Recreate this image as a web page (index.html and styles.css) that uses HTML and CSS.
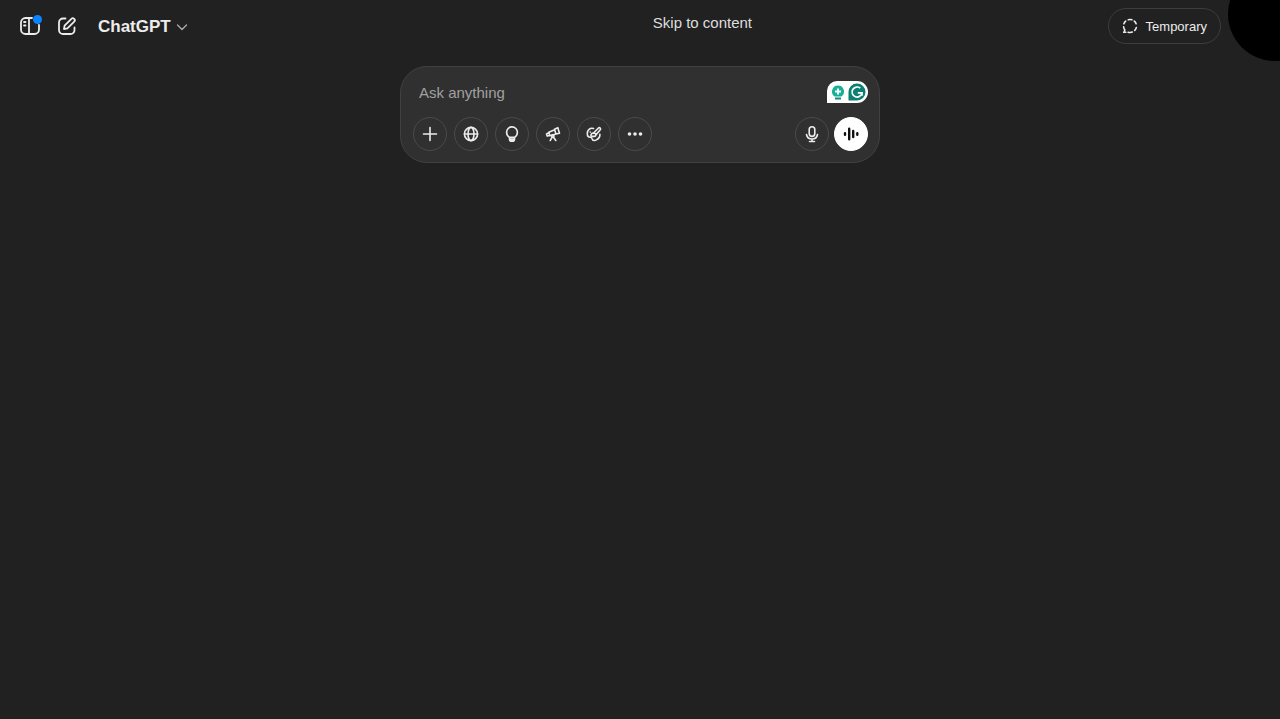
FILE: index.html
```html
<!DOCTYPE html>
<html lang="en">
<head>
    <meta charset="UTF-8">
    <meta name="viewport" content="width=device-width, initial-scale=1.0">
    <title>ChatGPT</title>
    <link rel="stylesheet" href="styles.css">
</head>
<body>

    <a class="skip-link" href="#main">Skip to content</a>

    <header class="top-bar">
        <button class="icon-btn" type="button" aria-label="Open sidebar">
            <svg width="22" height="22" viewBox="0 0 22 22" fill="none" stroke="currentColor" stroke-width="1.8" stroke-linecap="round">
                <path d="M13 3H6.500A4.500 4.500 0 0 0 2 7.500v7A4.500 4.500 0 0 0 6.500 19h9a4.500 4.500 0 0 0 4.500-4.500V10"/>
                <path d="M10 3v16M5 7h1.500M5 10.500h1.500"/>
            </svg>
            <span class="dot"></span>
        </button>
        <button class="icon-btn" type="button" aria-label="New chat">
            <svg width="22" height="22" viewBox="0 0 22 22" fill="none" stroke="currentColor" stroke-width="1.8" stroke-linecap="round" stroke-linejoin="round">
                <path d="M9.500 3.500H7A4 4 0 0 0 3 7.500V15a4 4 0 0 0 4 4h7.500a4 4 0 0 0 4-4v-2.500"/>
                <path d="M8 14l.6-3.400 6.800-6.800a1.950 1.950 0 0 1 2.800 2.800l-6.800 6.800z"/>
            </svg>
        </button>
        <button class="model-btn" type="button">
            ChatGPT
            <svg width="12" height="12" viewBox="0 0 12 12" fill="none" stroke="currentColor" stroke-width="1.4" stroke-linecap="round" stroke-linejoin="round">
                <path d="M1.500 4L6 8.500 10.500 4"/>
            </svg>
        </button>
        <button class="temporary-btn" type="button">
            <svg width="16" height="16" viewBox="0 0 16 16" fill="none" stroke="currentColor" stroke-width="1.6" stroke-linecap="round">
                <path d="M6.300 1.700a6.500 6.500 0 0 1 3.600 0M12.300 3.100a6.500 6.500 0 0 1 1.800 2.600M14.300 9.600a6.500 6.500 0 0 1-1.600 2.900M10.300 14.100a6.500 6.500 0 0 1-4.200.1M3.700 3.100a6.500 6.500 0 0 0-1.800 2.600M1.600 8.700c.1 1.300.6 2.400 1.200 3.300L2 14.200h1.800"/>
            </svg>
            Temporary
        </button>
    </header>
    <div class="corner-circle"></div>

    <main id="main">
        <form class="composer">
            <div class="prompt-row">
                <input class="prompt" type="text" placeholder="Ask anything" aria-label="Ask anything">
                <button class="grammar" type="button" aria-label="Writing suggestions">
                    <svg width="42" height="22" viewBox="0 0 42 22">
                        <path d="M1 22V10A10 10 0 0 1 11 0h20a11 11 0 0 1 0 22z" fill="#fff"/>
                        <path d="M12 4.500a6 6 0 0 0-3.300 11h6.600a6 6 0 0 0-3.300-11z" fill="#15b097"/>
                        <path d="M9 17.500h6" stroke="#0b8f7c" stroke-width="2"/>
                        <path d="M12 7.500v6M9 10.500h6" stroke="#fff" stroke-width="2"/>
                        <path d="M22.500 19.500V11a8.500 8.500 0 1 1 8.500 8.500z" fill="#0b8070"/>
                        <path d="M34.300 7.200A5 5 0 1 0 36 11.800H31.800M36 11.800v3" fill="none" stroke="#fff" stroke-width="1.700"/>
                    </svg>
                </button>
            </div>
            <div class="tools">
                <button class="tool" type="button" aria-label="Add files">
                    <svg width="18" height="18" viewBox="0 0 18 18">
                        <path d="M9 2.500v13M2.500 9h13"/>
                    </svg>
                </button>
                <button class="tool" type="button" aria-label="Search the web">
                    <svg width="18" height="18" viewBox="0 0 18 18">
                        <circle cx="9" cy="9" r="6.600"/>
                        <ellipse cx="9" cy="9" rx="3" ry="6.600"/>
                        <path d="M2.400 9h13.200"/>
                    </svg>
                </button>
                <button class="tool" type="button" aria-label="Reason">
                    <svg width="18" height="18" viewBox="0 0 18 18">
                        <path d="M6.300 12.200C4.600 11.200 3.600 9.500 3.600 7.300a5.400 5.400 0 0 1 10.800 0c0 2.200-1 3.900-2.700 4.900zM6.500 12.300v1.900a2 2 0 0 0 2 2h1a2 2 0 0 0 2-2v-1.900"/>
                        <path d="M7 14h4v1L9.500 16h-1L7 15z" fill="currentColor"/>
                    </svg>
                </button>
                <button class="tool" type="button" aria-label="Deep research">
                    <svg width="18" height="18" viewBox="0 0 18 18">
                        <path d="M10.500 4.200l3.300-1.500 1.700 5.500-3.500.9zM10.700 4.800L4.800 7.300l1 3.400 6.200-1.800M4.700 7.800L2.500 8.900l.7 2.200 2.500-.7"/>
                        <circle cx="8.800" cy="11.100" r="1.200"/>
                        <path d="M8.200 12.200L6.200 15.500M9.500 12.200l2.300 3.300"/>
                    </svg>
                </button>
                <button class="tool" type="button" aria-label="Create image">
                    <svg width="18" height="18" viewBox="0 0 18 18">
                        <path d="M8.500 3.500C5 2.600 2.300 4.800 2.300 8.400c0 2.500 1.400 3.800 3.100 3.800 1.200 0 1.500.6 1.800 1.700.6 1.900 2.400 2 4.200 1 2.300-1.200 3.700-3.200 3.500-5.600"/>
                        <path d="M8.400 8.300l4.800-5c1.500-1.500 3.200.1 1.900 1.700l-4.500 5.300M8.600 8c-1.800-.2-2.700 1.100-2.700 2.900 2.600.8 4.700.8 5-.9.100-1.200-.9-2-2.300-2z"/>
                        <path d="M5.300 7v.1"/>
                    </svg>
                </button>
                <button class="tool" type="button" aria-label="More">
                    <svg class="solid" width="18" height="18" viewBox="0 0 18 18">
                        <circle cx="3.500" cy="9" r="1.800"/>
                        <circle cx="9" cy="9" r="1.800"/>
                        <circle cx="14.500" cy="9" r="1.800"/>
                    </svg>
                </button>
                <div class="speech">
                    <button class="tool" type="button" aria-label="Dictate">
                        <svg width="18" height="18" viewBox="0 0 18 18">
                            <rect x="6.200" y="1.800" width="5.600" height="9.600" rx="2.800"/>
                            <path d="M3.500 9.500a5.600 5.600 0 0 0 11 0M9 14v2.500M6.500 16.500h5"/>
                        </svg>
                    </button>
                    <button class="tool voice" type="button" aria-label="Voice mode">
                        <svg width="18" height="18" viewBox="0 0 18 18">
                            <path d="M3 8.300v1.400M7.200 3.800v10.400M11.200 6v6M15.300 8.300v1.400"/>
                        </svg>
                    </button>
                </div>
            </div>
        </form>
    </main>

</body>
</html>
```
FILE: styles.css
```css
* {
    box-sizing: border-box;
}

body {
    background: #212121;
    margin: 0;
    font-family: "Liberation Sans", Arial, sans-serif;
    color: #ececec;
    overflow-x: hidden;
}

button {
    display: flex;
    align-items: center;
    justify-content: center;
    padding: 0;
    border: 0;
    background: none;
    color: inherit;
    font-family: inherit;
    cursor: pointer;
}

svg {
    display: block;
    flex: none;
}

.skip-link {
    position: absolute;
    top: 13px;
    left: 51%;
    font-size: 15px;
    line-height: 20px;
    color: #dedede;
    text-decoration: none;
}

.top-bar {
    display: flex;
    align-items: center;
    height: 52px;
    padding: 0 59px 0 13px;
}

.icon-btn {
    position: relative;
    width: 34px;
    height: 34px;
    margin-right: 3px;
}

.dot {
    position: absolute;
    top: 6px;
    right: 5px;
    width: 9px;
    height: 9px;
    border-radius: 50%;
    background: #0a84ff;
}

.model-btn {
    gap: 5px;
    margin-left: 11px;
    padding-top: 2px;
    font-size: 17px;
    font-weight: bold;
    line-height: 24px;
}

.model-btn svg {
    color: #a8a8a8;
}

.temporary-btn {
    gap: 8px;
    height: 36px;
    margin-left: auto;
    padding: 0 13px;
    border: 1px solid #3d3d3d;
    border-radius: 18px;
    font-size: 13px;
}

.corner-circle {
    position: absolute;
    top: -33px;
    right: -42px;
    width: 94px;
    height: 94px;
    border-radius: 50%;
    background: #000;
    clip-path: inset(0 42px 0 0);
}

#main {
    padding: 14px 16px;
}

.composer {
    max-width: 480px;
    margin: 0 auto;
    padding: 13px 11px 11px 12px;
    border: 1px solid #414141;
    border-radius: 27px;
    background: #303030;
}

.prompt-row {
    display: flex;
    align-items: center;
    height: 24px;
    margin-bottom: 13px;
    padding-left: 6px;
}

.prompt {
    flex: 1;
    min-width: 0;
    padding: 0;
    border: 0;
    outline: 0;
    background: none;
    color: #ececec;
    font-family: inherit;
    font-size: 15px;
}

.prompt::placeholder {
    color: #a0a0a0;
}

.tools {
    display: flex;
    gap: 7px;
}

.tool {
    width: 34px;
    height: 34px;
    border: 1px solid #4a4a4a;
    border-radius: 50%;
}

.tool svg {
    fill: none;
    stroke: currentColor;
    stroke-width: 1.6;
    stroke-linecap: round;
    stroke-linejoin: round;
}

.tool .solid {
    fill: currentColor;
    stroke: none;
}

.speech {
    display: flex;
    gap: 5px;
    margin-left: auto;
}

.voice {
    border-color: #fff;
    background: #fff;
    color: #111;
}

.voice svg {
    stroke-width: 2.4;
}
```
